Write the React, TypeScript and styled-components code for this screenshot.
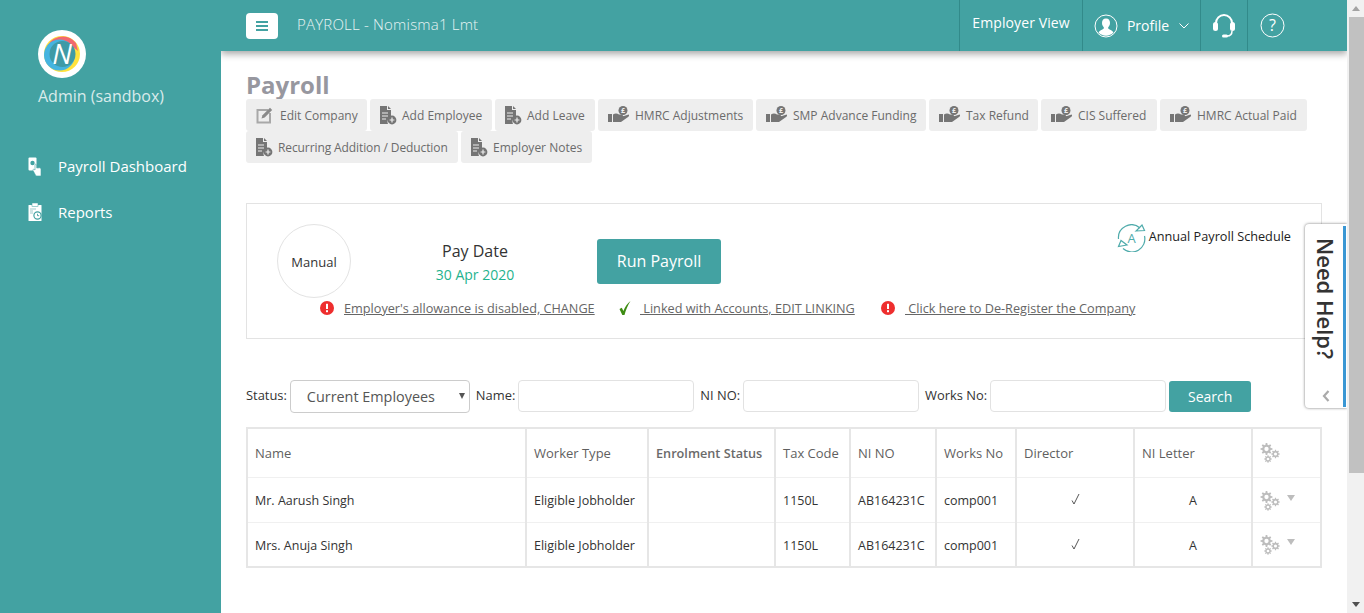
import styled, { createGlobalStyle } from "styled-components";

const TEAL = "#43a2a2";

const GlobalStyle = createGlobalStyle`
  html, body {
    margin: 0;
    height: 100%;
    overflow: hidden;
    background: #fff;
    font-family: "Open Sans", "Liberation Sans", sans-serif;
  }
  * { box-sizing: border-box; }
`;

function DocPlusIcon() {
  return (
    <svg width="18" height="20" viewBox="1 0 18 20">
      <path d="M1 1h7v4h4v7a5 5 0 0 0-3 7H1z" fill="#757575" />
      <path d="M9 1l3 3H9z" fill="#757575" />
      <path d="M3 8h6M3 11h6M3 14h4" stroke="#eee" strokeWidth="1" />
      <circle cx="13" cy="15" r="4.4" fill="#757575" />
      <path d="M13 12.6v4.8M10.6 15h4.8" stroke="#eee" strokeWidth="1.2" />
    </svg>
  );
}

function EditIcon() {
  return (
    <svg width="18" height="18" viewBox="0 0 18 18">
      <path d="M12 4H1.5v12.5H14V7" fill="none" stroke="#a8a8a8" strokeWidth="2" />
      <path d="M5.5 12.5l1-3.2 7.5-7.5 2.2 2.2-7.5 7.5z" fill="#8a8a8a" />
    </svg>
  );
}

function HandPoundIcon() {
  return (
    <svg width="22" height="18" viewBox="0 0 22 18">
      <rect x="0" y="8" width="4" height="8" fill="#757575" />
      <path d="M5 8.5c2-1.3 4-1.3 6 0h3c1.2 0 1.2 2 0 2h-3l5-.6 4.6-1.4c.8.8.5 1.6-.2 2.2L13 16H5z" fill="#757575" />
      <circle cx="15" cy="4.5" r="4.5" fill="#757575" />
      <text x="15" y="7" textAnchor="middle" fontSize="7" fontWeight="700" fill="#eee" fontFamily="Open Sans">£</text>
    </svg>
  );
}

// toothed wheel with a round hole, outer radius r
function gearPath(cx: number, cy: number, r: number) {
  const teeth = 8;
  const inner = r * 0.72;
  const points: string[] = [];
  for (let i = 0; i < teeth; i++) {
    const a = (i / teeth) * Math.PI * 2;
    const w = Math.PI / teeth / 2;
    [
      [inner, a - w * 1.2],
      [r, a - w * 0.7],
      [r, a + w * 0.7],
      [inner, a + w * 1.2],
    ].forEach(([rad, ang]) => {
      points.push(`${(cx + rad * Math.cos(ang)).toFixed(2)} ${(cy + rad * Math.sin(ang)).toFixed(2)}`);
    });
  }
  const hole = r * 0.36;
  return `M${points.join("L")}Z M${cx - hole} ${cy}a${hole} ${hole} 0 1 0 ${hole * 2} 0a${hole} ${hole} 0 1 0 ${-hole * 2} 0Z`;
}

function GearsIcon() {
  return (
    <svg width="20" height="20" viewBox="0 0 20 20">
      <path
        fill="#bdbdbd"
        fillRule="evenodd"
        d={`${gearPath(6.5, 6, 6)} ${gearPath(15.5, 11, 4.3)} ${gearPath(8, 16, 3.8)}`}
      />
    </svg>
  );
}

function AlertIcon() {
  return (
    <svg width="14" height="14" viewBox="0 0 14 14">
      <circle cx="7" cy="7" r="7" fill="#ee2e2e" />
      <rect x="6" y="2.8" width="2" height="5.2" fill="#fff" />
      <rect x="6" y="9.2" width="2" height="2" fill="#fff" />
    </svg>
  );
}

function CheckIcon() {
  return (
    <svg width="14" height="16" viewBox="0 0 14 16">
      <path d="M1.5 9l2.3-1.2 1.6 3.2C7 6.800 9.500 3.500 12.500 1c-2.500 4-4.600 8.500-6 14H4.300z" fill="#3d8c12" />
    </svg>
  );
}

function TickMark() {
  return (
    <svg width="9" height="12" viewBox="0 0 9 12">
      <path d="M1 7.500l2 3.500L8 1" fill="none" stroke="#444" strokeWidth="0.900" />
    </svg>
  );
}

function ScheduleIcon() {
  return (
    <svg width="29" height="28" viewBox="0 0 29 28" fill="none" stroke="#4fabab" strokeWidth="1.200">
      <path d="M1.500 15A13 13 0 0 1 23 4" />
      <path d="M27.500 12A13 13 0 0 1 6 24.500" />
      <path d="M19 7l8.500-.5-2.500-5.500zM10 21l-8.500 1.500 2.500-6z" />
      <text x="14.500" y="19" textAnchor="middle" fontSize="13" fill="#4fabab" stroke="none" fontFamily="Open Sans">A</text>
    </svg>
  );
}

function UserCircleIcon() {
  return (
    <svg width="24" height="24" viewBox="0 0 24 24">
      <circle cx="12" cy="12" r="11" fill="none" stroke="#fff" strokeWidth="1" />
      <path d="M12 4.500c-2.800 0-4 2-4 4.500 0 2 1 3.500 1.800 4.300v1.200C8 16 5.500 16.500 4.500 18.500a10.500 10.500 0 0 0 15 0c-1-2-3.500-2.500-5.300-4v-1.200C15 12.500 16 11 16 9c0-2.500-1.200-4.500-4-4.500z" fill="#fff" />
    </svg>
  );
}

function HeadsetIcon() {
  return (
    <svg width="24" height="26" viewBox="0 0 24 26">
      <path d="M4 12V10a8 8 0 0 1 16 0v2" fill="none" stroke="#fff" strokeWidth="2" />
      <rect x="1" y="9" width="5" height="9" rx="2.500" fill="#fff" />
      <rect x="18" y="9" width="5" height="9" rx="2.500" fill="#fff" />
      <path d="M20 18c0 3-2 5-5 5" fill="none" stroke="#fff" strokeWidth="1.500" />
      <rect x="10" y="21.500" width="6" height="3" rx="1.500" fill="#fff" />
    </svg>
  );
}

function HelpIcon() {
  return (
    <svg width="25" height="25" viewBox="0 0 25 25">
      <circle cx="12.500" cy="12.500" r="11.500" fill="none" stroke="#fff" strokeWidth="1" />
      <text x="12.500" y="18" textAnchor="middle" fontSize="16" fill="#fff" fontFamily="Open Sans">?</text>
    </svg>
  );
}

function PayrollNavIcon() {
  return (
    <svg width="14" height="19" viewBox="0 0 14 19">
      <rect x="0.500" y="0.500" width="8" height="13" rx="1" fill="#fff" />
      <circle cx="4.500" cy="6" r="2.200" fill={TEAL} />
      <path d="M7 7.500c.6-.6 1.400-.3 1.500.5l.2 3 3-.2c1 .2 1.300 1 1.300 2L13 19H8L5 13.500c-.3-1 .5-1.600 1.300-1L7 13z" fill="#fff" stroke={TEAL} strokeWidth="0.600" />
    </svg>
  );
}

function ReportsNavIcon() {
  return (
    <svg width="14" height="18" viewBox="0 0 14 18">
      <rect x="0.500" y="2" width="13" height="16" rx="0.500" fill="#fff" />
      <rect x="4" y="0" width="6" height="3.500" fill="#fff" stroke={TEAL} strokeWidth="0.500" />
      <path d="M2 5h6v2H5v4H2z" fill="#cfe5e5" />
      <circle cx="9.500" cy="12.500" r="3.600" fill="none" stroke={TEAL} strokeWidth="1.200" />
      <path d="M9.500 10.800v1.900h1.700" fill="none" stroke={TEAL} strokeWidth="0.900" />
    </svg>
  );
}

function LogoMark() {
  return (
    <svg width="48" height="48" viewBox="0 0 48 48">
      <circle cx="24" cy="24" r="24" fill="#fff" />
      <circle cx="24" cy="24" r="18" fill="#ffe23d" />
      <path d="M8 20a17 17 0 0 1 30-7l2 8c-8-8-22-9-32-1z" fill="#f2686f" />
      <circle cx="21.500" cy="25" r="15.500" fill="#45b4e0" />
      <circle cx="24.500" cy="24" r="13" fill="#3f9aa6" />
      <text x="24" y="33.500" textAnchor="middle" fontSize="28" fontStyle="italic" fontWeight="400" fill="#fff" fontFamily="Open Sans">N</text>
    </svg>
  );
}

type ActionIcon = "edit" | "doc" | "hand";

const ACTION_ICONS: Record<ActionIcon, () => React.JSX.Element> = {
  edit: EditIcon,
  doc: DocPlusIcon,
  hand: HandPoundIcon,
};

const ACTIONS: { label: string; icon: ActionIcon; width: number; gap: number; tight?: boolean }[] = [
  { label: "Edit Company", icon: "edit", width: 121, gap: 6 },
  { label: "Add Employee", icon: "doc", width: 122, gap: 4 },
  { label: "Add Leave", icon: "doc", width: 100, gap: 4 },
  { label: "HMRC Adjustments", icon: "hand", width: 155, gap: 5 },
  { label: "SMP Advance Funding", icon: "hand", width: 170, gap: 5 },
  { label: "Tax Refund", icon: "hand", width: 109, gap: 5 },
  { label: "CIS Suffered", icon: "hand", width: 116, gap: 5 },
  { label: "HMRC Actual Paid", icon: "hand", width: 147, gap: 5 },
  { label: "Recurring Addition / Deduction", icon: "doc", width: 212, gap: 4, tight: true },
  { label: "Employer Notes", icon: "doc", width: 131, gap: 4 },
];

const COLUMNS = [
  { label: "Name", width: 279 },
  { label: "Worker Type", width: 122 },
  { label: "Enrolment Status", width: 127, strong: true },
  { label: "Tax Code", width: 75 },
  { label: "NI NO", width: 86 },
  { label: "Works No", width: 80 },
  { label: "Director", width: 118 },
  { label: "NI Letter", width: 118 },
];

const EMPLOYEES = ["Mr. Aarush Singh", "Mrs. Anuja Singh"];

export default function App() {
  return (
    <Page>
      <GlobalStyle />
      <Sidebar>
        <Brand>
          <LogoMark />
          <BrandName>Admin (sandbox)</BrandName>
        </Brand>
        <Nav>
          <NavItem>
            <NavIconSlot><PayrollNavIcon /></NavIconSlot>
            Payroll Dashboard
          </NavItem>
          <NavItem>
            <NavIconSlot><ReportsNavIcon /></NavIconSlot>
            Reports
          </NavItem>
        </Nav>
      </Sidebar>

      <Main>
        <TopBar>
          <MenuButton aria-label="Menu">
            <svg width="12" height="10" viewBox="0 0 12 10">
              <path d="M0 1h12M0 5h12M0 9h12" stroke={TEAL} strokeWidth="2" />
            </svg>
          </MenuButton>
          <CompanyTitle>PAYROLL - Nomisma1 Lmt</CompanyTitle>
          <TopSection $width={123}>
            <EmployerView>Employer View</EmployerView>
          </TopSection>
          <TopSection $width={118}>
            <UserCircleIcon />
            <ProfileLabel>Profile</ProfileLabel>
            <svg width="10" height="6" viewBox="0 0 10 6">
              <path d="M0.500 0.500L5 5l4.500-4.500" fill="none" stroke="#fff" strokeWidth="1" />
            </svg>
          </TopSection>
          <TopSection $width={47}>
            <HeadsetIcon />
          </TopSection>
          <TopSection $width={100} $start>
            <HelpIcon />
          </TopSection>
        </TopBar>

        <Content>
          <Heading>Payroll</Heading>
          <Actions>
            {ACTIONS.map((action) => {
              const Icon = ACTION_ICONS[action.icon];
              return (
                <ActionButton key={action.label} $width={action.width} $gap={action.gap} $tight={action.tight}>
                  <Icon />
                  {action.label}
                </ActionButton>
              );
            })}
          </Actions>

          <PayPanel>
            <PayRow>
              <ModeCircle>Manual</ModeCircle>
              <PayDate>
                <PayDateLabel>Pay Date</PayDateLabel>
                <PayDateValue>30 Apr 2020</PayDateValue>
              </PayDate>
              <RunButton>Run Payroll</RunButton>
              <Schedule>
                <ScheduleIcon />
                <ScheduleText>Annual Payroll Schedule</ScheduleText>
              </Schedule>
            </PayRow>
            <NoticeRow>
              <Notice $width={298}>
                <AlertIcon />
                <NoticeLink $indent={10}>Employer's allowance is disabled, CHANGE</NoticeLink>
              </Notice>
              <Notice $width={263}>
                <CheckIcon />
                <NoticeLink $indent={8}>&nbsp;Linked with Accounts, EDIT LINKING</NoticeLink>
              </Notice>
              <Notice>
                <AlertIcon />
                <NoticeLink $indent={10}>&nbsp;Click here to De-Register the Company</NoticeLink>
              </Notice>
            </NoticeRow>
          </PayPanel>

          <Filters>
            <FilterLabel>Status:</FilterLabel>
            <SelectWrap>
              <StatusSelect defaultValue="current">
                <option value="current">Current Employees</option>
              </StatusSelect>
            </SelectWrap>
            <FilterLabel>Name:</FilterLabel>
            <FilterInput />
            <FilterLabel>NI NO:</FilterLabel>
            <FilterInput />
            <FilterLabel>Works No:</FilterLabel>
            <FilterInput />
            <SearchButton>Search</SearchButton>
          </Filters>

          <EmployeeTable>
            <thead>
              <tr>
                {COLUMNS.map((col) => (
                  <HeadCell key={col.label} $width={col.width} $strong={col.strong}>
                    {col.label}
                  </HeadCell>
                ))}
                <HeadCell $width={69}>
                  <GearsIcon />
                </HeadCell>
              </tr>
            </thead>
            <tbody>
              {EMPLOYEES.map((name) => (
                <tr key={name}>
                  <Cell>{name}</Cell>
                  <Cell>Eligible Jobholder</Cell>
                  <Cell />
                  <Cell>1150L</Cell>
                  <Cell>AB164231C</Cell>
                  <Cell>comp001</Cell>
                  <Cell $center><TickMark /></Cell>
                  <Cell $center>A</Cell>
                  <Cell>
                    <RowMenu>
                      <GearsIcon />
                      <RowCaret />
                    </RowMenu>
                  </Cell>
                </tr>
              ))}
            </tbody>
          </EmployeeTable>
        </Content>

        <HelpTab>
          <HelpTabText>Need Help?</HelpTabText>
          <svg width="8" height="12" viewBox="0 0 8 12">
            <path d="M6.500 1L2 6l4.500 5" fill="none" stroke="#aaa" strokeWidth="2.200" />
          </svg>
        </HelpTab>
      </Main>

      <ScrollRail>
        <ScrollArrow $up />
        <ScrollThumb />
        <ScrollArrow />
      </ScrollRail>
    </Page>
  );
}

const Page = styled.div`
  display: flex;
  height: 613px;
  overflow: hidden;
`;

const Sidebar = styled.aside`
  flex: 0 0 221px;
  background: ${TEAL};
  position: relative;
  z-index: 2;
`;

const Brand = styled.div`
  padding: 30px 0 0 38px;
  height: 143px;
`;

const BrandName = styled.div`
  margin-top: 1px;
  color: #d9ebeb;
  font-size: 16px;
  font-weight: 500;
  line-height: 24px;
  white-space: nowrap;
`;

const Nav = styled.nav`
  display: flex;
  flex-direction: column;
`;

const NavItem = styled.a`
  display: flex;
  align-items: center;
  height: 46px;
  padding-left: 28px;
  color: #fff;
  font-size: 15px;
`;

const NavIconSlot = styled.span`
  display: flex;
  width: 30px;
`;

const Main = styled.div`
  flex: 1;
  min-width: 0;
  display: flex;
  flex-direction: column;
  position: relative;
`;

const TopBar = styled.header`
  flex: 0 0 51px;
  display: flex;
  align-items: center;
  padding-left: 25px;
  background: ${TEAL};
  box-shadow: 0 3px 7px rgba(0, 0, 0, 0.35);
  position: relative;
  z-index: 1;
`;

const MenuButton = styled.button`
  width: 32px;
  height: 26px;
  padding: 0;
  display: flex;
  align-items: center;
  justify-content: center;
  background: #fff;
  border: 0;
  border-radius: 4px;
`;

const CompanyTitle = styled.div`
  margin: -3px auto 0 19px;
  color: #e8f4f4;
  font-size: 15px;
  font-weight: 300;
  letter-spacing: 0.2px;
  white-space: nowrap;
`;

const TopSection = styled.div<{ $width: number; $start?: boolean }>`
  flex: 0 0 ${(p) => p.$width}px;
  height: 100%;
  display: flex;
  align-items: center;
  justify-content: ${(p) => (p.$start ? "flex-start" : "center")};
  padding-left: ${(p) => (p.$start ? "12px" : "0")};
  border-left: 1px solid #328a8a;
  color: #fff;
`;

const EmployerView = styled.span`
  font-size: 14px;
  margin-top: -7px;
  letter-spacing: 0.1px;
  white-space: nowrap;
`;

const ProfileLabel = styled.span`
  font-size: 14px;
  margin: 0 10px 0 9px;
`;

const Content = styled.main`
  flex: 1;
  padding: 20px 25px 0;
`;

const Heading = styled.h1`
  margin: 0;
  height: 28px;
  color: #97979f;
  font-size: 24px;
  font-weight: 700;
  line-height: 27px;
`;

const Actions = styled.div`
  display: flex;
  flex-wrap: wrap;
  column-gap: 3px;
`;

const ActionButton = styled.div<{ $width: number; $gap: number; $tight?: boolean }>`
  width: ${(p) => p.$width}px;
  height: 32px;
  display: flex;
  align-items: center;
  gap: ${(p) => p.$gap}px;
  padding-left: 10px;
  background: #eee;
  border-radius: 3px;
  color: #6b6b6b;
  font-size: 12px;
  letter-spacing: ${(p) => (p.$tight ? "-0.1px" : "0")};
  white-space: nowrap;
`;

const PayPanel = styled.section`
  width: 1076px;
  height: 136px;
  margin-top: 40px;
  padding: 20px 30px 0;
  border: 1px solid #e3e3e3;
`;

const PayRow = styled.div`
  display: flex;
  height: 74px;
`;

const ModeCircle = styled.div`
  flex: 0 0 74px;
  height: 74px;
  padding-top: 2px;
  display: flex;
  align-items: center;
  justify-content: center;
  border: 1px solid #e3e3e3;
  border-radius: 50%;
  color: #333;
  font-size: 13px;
`;

const PayDate = styled.div`
  width: 124px;
  margin-left: 62px;
  padding-top: 15px;
  text-align: center;
`;

const PayDateLabel = styled.div`
  color: #333;
  font-size: 16px;
  line-height: 24px;
`;

const PayDateValue = styled.div`
  color: #1fb38e;
  font-size: 14px;
  line-height: 24px;
`;

const RunButton = styled.button`
  width: 124px;
  height: 45px;
  margin: 15px 0 0 60px;
  padding: 0 0 2px;
  background: ${TEAL};
  border: 0;
  border-radius: 3px;
  color: #fff;
  font-family: inherit;
  font-size: 16px;
`;

const Schedule = styled.div`
  margin-left: auto;
  height: 28px;
  display: flex;
  align-items: center;
  gap: 3px;
  color: #222;
  font-size: 12.700px;
  white-space: nowrap;
`;

const ScheduleText = styled.span`
  margin-top: -4px;
`;

const NoticeRow = styled.div`
  display: flex;
  height: 20px;
  padding-left: 43px;
`;

const Notice = styled.div<{ $width?: number }>`
  display: flex;
  align-items: center;
  width: ${(p) => (p.$width ? `${p.$width}px` : "auto")};
`;

const NoticeLink = styled.a<{ $indent: number }>`
  margin-left: ${(p) => p.$indent}px;
  color: #666;
  font-size: 12.700px;
  text-decoration: underline;
  white-space: nowrap;
`;

const Filters = styled.div`
  display: flex;
  align-items: flex-start;
  height: 33px;
  margin-top: 41px;
`;

const FilterLabel = styled.label`
  margin: 6px 3px 0 6px;
  color: #333;
  font-size: 12.900px;
  line-height: 18px;
  white-space: nowrap;
  &:first-child {
    margin-left: 0;
  }
`;

const SelectWrap = styled.div`
  position: relative;
  width: 180px;
  height: 33px;
  &::after {
    content: "";
    position: absolute;
    right: 5px;
    top: 13px;
    border-left: 3.500px solid transparent;
    border-right: 3.500px solid transparent;
    border-top: 6px solid #555;
    pointer-events: none;
  }
`;

const StatusSelect = styled.select`
  appearance: none;
  width: 100%;
  height: 100%;
  padding: 0 0 0 16px;
  background: #fff;
  border: 1px solid #ccc;
  border-radius: 4px;
  color: #555;
  font-family: inherit;
  font-size: 14.400px;
`;

const FilterInput = styled.input`
  width: 176px;
  height: 32px;
  background: #fff;
  border: 1px solid #e2e2e2;
  border-radius: 4px;
`;

const SearchButton = styled.button`
  width: 82px;
  height: 31px;
  margin: 1px 0 0 3px;
  background: ${TEAL};
  border: 0;
  border-radius: 3px;
  color: #fff;
  font-family: inherit;
  font-size: 14px;
`;

const EmployeeTable = styled.table`
  width: 1074px;
  margin-top: 14px;
  table-layout: fixed;
  border-collapse: collapse;
  border: 2px solid #e6e6e6;
`;

const HeadCell = styled.th<{ $width: number; $strong?: boolean }>`
  width: ${(p) => p.$width}px;
  height: 49px;
  padding: 1px 7px 0;
  border-left: 2px solid #e6e6e6;
  border-bottom: 1px solid #f0f0f0;
  color: ${(p) => (p.$strong ? "#6a6a6a" : "#5f5f5f")};
  font-size: ${(p) => (p.$strong ? "12.700px" : "13px")};
  font-weight: ${(p) => (p.$strong ? 600 : 500)};
  text-align: left;
  white-space: nowrap;
  & > svg {
    display: block;
  }
`;

const Cell = styled.td<{ $center?: boolean }>`
  height: 45px;
  padding: 2px 7px 0;
  border-left: 2px solid #e6e6e6;
  border-bottom: 1px solid #f0f0f0;
  color: #333;
  font-size: 12.500px;
  text-align: ${(p) => (p.$center ? "center" : "left")};
  white-space: nowrap;
`;

const RowMenu = styled.div`
  display: flex;
  align-items: center;
  gap: 7px;
`;

const RowCaret = styled.span`
  width: 0;
  height: 0;
  margin-top: -6px;
  border-left: 4px solid transparent;
  border-right: 4px solid transparent;
  border-top: 6px solid #bdbdbd;
`;

const HelpTab = styled.aside`
  position: absolute;
  top: 224px;
  right: 0;
  width: 42px;
  height: 184px;
  padding: 14px 0 6px 0;
  display: flex;
  flex-direction: column;
  align-items: center;
  justify-content: space-between;
  background: #fff;
  border-radius: 4px 0 0 4px;
  box-shadow: 0 0 3px rgba(0, 0, 0, 0.55);
  &::after {
    content: "";
    position: absolute;
    top: 2px;
    bottom: 1px;
    right: 1px;
    width: 3px;
    background: #3a97d4;
  }
`;

const HelpTabText = styled.div`
  writing-mode: vertical-rl;
  color: #333;
  font-size: 22px;
  font-weight: 600;
  line-height: 26px;
  white-space: nowrap;
`;

const ScrollRail = styled.div`
  flex: 0 0 17px;
  display: flex;
  flex-direction: column;
  background: #f1f1f1;
  position: relative;
  z-index: 2;
`;

const ScrollArrow = styled.div<{ $up?: boolean }>`
  flex: 0 0 17px;
  position: relative;
  &::after {
    content: "";
    position: absolute;
    left: 5px;
    top: 6px;
    border-left: 4px solid transparent;
    border-right: 4px solid transparent;
    ${(p) => (p.$up ? "border-bottom: 5px solid #a3a3a3;" : "border-top: 5px solid #505050;")}
  }
`;

const ScrollThumb = styled.div`
  flex: 0 0 456px;
  margin: 0 0 auto 2px;
  background: #c1c1c1;
`;
